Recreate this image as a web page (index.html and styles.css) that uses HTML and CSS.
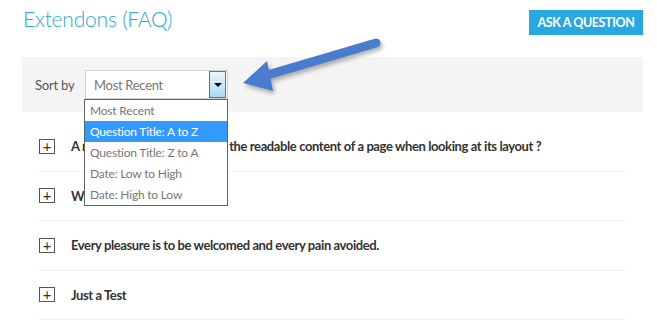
FILE: index.html
```html
<!DOCTYPE html>
<html lang="en">
    <head>
        <meta charset="UTF-8" />
        <meta name="viewport" content="width=device-width, initial-scale=1.0" />
        <title>Extendons (FAQ)</title>
        <link rel="stylesheet" href="styles.css">
    </head>
    <body>
        <div class="page">
            <div class="page-header">
                <h1>Extendons (FAQ)</h1>
                <button type="button" class="btn-ask">ASK A QUESTION</button>
            </div>
            <div class="sort-bar">
                <span class="sort-label">Sort by</span>
                <div class="select-wrap">
                    <div class="select-box">
                        <span class="select-value">Most Recent</span>
                        <span class="select-btn"><span class="caret"></span></span>
                    </div>
                    <ul class="select-list">
                        <li>Most Recent</li>
                        <li class="active">Question Title: A to Z</li>
                        <li>Question Title: Z to A</li>
                        <li>Date: Low to High</li>
                        <li>Date: High to Low</li>
                    </ul>
                </div>
            </div>
            <div class="faq-list">
                <div class="faq-item">
                    <span class="faq-toggle">+</span>
                    <span class="faq-question">A reader will be distracted by the readable content of a page when looking at its layout ?</span>
                </div>
                <div class="faq-item">
                    <span class="faq-toggle">+</span>
                    <span class="faq-question">Why do we use it?</span>
                </div>
                <div class="faq-item">
                    <span class="faq-toggle">+</span>
                    <span class="faq-question">Every pleasure is to be welcomed and every pain avoided.</span>
                </div>
                <div class="faq-item">
                    <span class="faq-toggle">+</span>
                    <span class="faq-question">Just a Test</span>
                </div>
            </div>
            <svg class="pointer" width="160" height="70" viewBox="0 0 160 70">
                <line x1="146" y1="13" x2="34" y2="46" stroke="#4a7bcd" stroke-width="9" stroke-linecap="round" />
                <polygon points="13,53 37,31 43,61" fill="#4a7bcd" />
            </svg>
        </div>
    </body>
</html>
```

FILE: styles.css
```css
* {
    padding: 0;
    margin: 0;
    box-sizing: border-box;
}
body {
    font-family: Lato, 'Open Sans', sans-serif;
    background-color: #ffffff;
    color: #333;
}
.page {
    position: relative;
    width: 657px;
    padding: 0 14px 0 22px;
}
.page-header {
    display: flex;
    justify-content: space-between;
    align-items: flex-start;
    height: 57px;
}
h1 {
    margin: 6px 0 0 1px;
    font-size: 21px;
    line-height: 26px;
    font-weight: 300;
    letter-spacing: -0.2px;
    color: #29a9e1;
}
.btn-ask {
    margin-top: 10px;
    width: 114px;
    height: 25px;
    border: none;
    background-color: #27a8e0;
    color: #ffffff;
    font-family: Lato, sans-serif;
    font-weight: bold;
    font-size: 12.5px;
    letter-spacing: -0.4px;
    cursor: pointer;
}
.sort-bar {
    display: flex;
    align-items: center;
    height: 55px;
    padding: 0 0 0 13px;
    background-color: #f4f4f4;
}
.sort-label {
    width: 50px;
    font-size: 13px;
    letter-spacing: -0.2px;
    color: #555;
}
.select-wrap {
    position: relative;
}
.select-box {
    display: flex;
    align-items: center;
    width: 143px;
    height: 29px;
    padding: 0 0 0 8px;
    background: #ffffff;
    border: 1px solid #cfcfcf;
}
.select-value {
    flex: 1;
    font-size: 13px;
    letter-spacing: -0.3px;
    color: #777;
}
.select-btn {
    display: flex;
    align-items: center;
    justify-content: center;
    width: 17px;
    height: 27px;
    margin-right: 1px;
    border: 1px solid #3c7fb1;
    background: linear-gradient(#eaf6fd, #a7d9f5);
}
.caret {
    width: 0;
    height: 0;
    border-left: 4px solid transparent;
    border-right: 4px solid transparent;
    border-top: 4px solid #000;
}
.select-list {
    position: absolute;
    top: 29px;
    left: -1px;
    width: 144px;
    list-style: none;
    background: #ffffff;
    border: 1px solid #646464;
    z-index: 2;
}
.select-list li {
    height: 21px;
    line-height: 21px;
    padding-left: 5px;
    font-size: 12px;
    letter-spacing: -0.2px;
    color: #777;
}
.select-list li.active {
    background-color: #3399ff;
    color: #ffffff;
}
.faq-list {
    padding: 10px 18px 0 17px;
}
.faq-item {
    display: flex;
    align-items: center;
    height: 49.5px;
    border-bottom: 1px solid #eeeeee;
}
.faq-toggle {
    display: flex;
    align-items: center;
    justify-content: center;
    width: 16px;
    height: 15px;
    margin-right: 16px;
    border: 1px solid #555;
    font-size: 15px;
    line-height: 1;
    color: #333;
}
.faq-question {
    font-size: 13px;
    font-weight: bold;
    letter-spacing: -0.4px;
    color: #333;
}
.pointer {
    position: absolute;
    left: 230px;
    top: 30px;
    filter: drop-shadow(2px 3px 2px rgba(0, 0, 0, 0.3));
}
```
